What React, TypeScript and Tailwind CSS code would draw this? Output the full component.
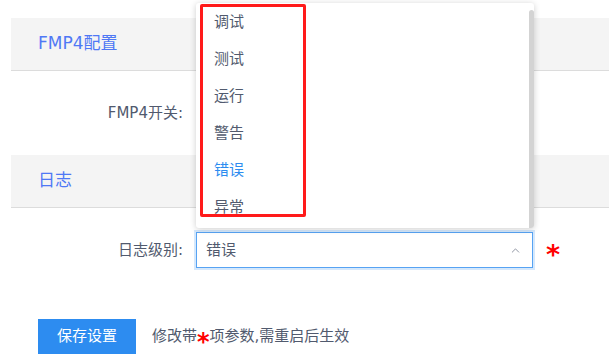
import { ChevronUp } from "lucide-react"

const levels = ["调试", "测试", "运行", "警告", "错误", "异常"]
const selected = "错误"

const Band = ({ title }: { title: string }) => (
  <div className="h-[53px] bg-[#f4f4f4] border-b border-[#dcdcdc] flex items-center pl-[27px] text-[17px] text-[#4f78f5]">
    {title}
  </div>
)

export default function App() {
  return (
    <div className="relative w-[609px] h-[359px] overflow-hidden bg-white text-[#515a6e] font-['DejaVu_Sans','Noto_Sans_CJK_SC',sans-serif]">
      <div className="pt-[18px] pl-[11px]">
        {/* FMP4 section */}
        <Band title="FMP4配置" />
        <div className="h-[84px] flex items-center">
          <label className="w-[172px] text-right text-[15px]">FMP4开关:</label>
        </div>

        {/* log section */}
        <Band title="日志" />
        <div className="pt-[24px] flex items-center">
          <label className="w-[172px] text-right text-[15px]">日志级别:</label>
          <div className="ml-[13px] w-[337px] h-[36px] border border-[#57a3f3] ring-2 ring-[#2d8cf0]/20 bg-white flex items-center justify-between pl-[9px] pr-[10px] text-[15px]">
            <span>{selected}</span>
            <ChevronUp size={13} strokeWidth={1.6} className="text-[#808695]" />
          </div>
          <span className="ml-[13px] h-[18px] text-[#ff0000] text-[27px] font-bold leading-none">*</span>
        </div>

        {/* actions */}
        <div className="mt-[51px] flex items-center">
          <button className="ml-[27px] w-[98px] h-[35px] bg-[#2d8cf0] text-white text-[15px]">保存设置</button>
          <span className="ml-[16px] text-[15px] flex items-center">
            修改带
            <span className="h-[16px] text-[#ff0000] text-[24px] font-bold leading-none translate-y-[1px]">*</span>
            项参数,需重启后生效
          </span>
        </div>
      </div>

      {/* dropdown popup */}
      <div className="absolute left-[196px] top-[3px] w-[338px] h-[225px] bg-white rounded-[3px] shadow-[0_1px_6px_rgba(0,0,0,0.2)] overflow-hidden">
        <ul className="pt-[1px] text-[15px]">
          {levels.map((l) => (
            <li
              key={l}
              className={`h-[37px] flex items-center pl-[18px] ${l === selected ? "text-[#2d8cf0]" : "text-[#515a6e]"}`}
            >
              {l}
            </li>
          ))}
        </ul>
        <div className="absolute right-0 top-[7px] bottom-0 w-[5px] bg-[#d3d3d3] rounded-t-sm" />
      </div>

      {/* annotation box */}
      <div className="absolute left-[200px] top-[4px] w-[106px] h-[213px] border-[3px] border-[#ff1a1a] rounded-[2px]" />
    </div>
  )
}
